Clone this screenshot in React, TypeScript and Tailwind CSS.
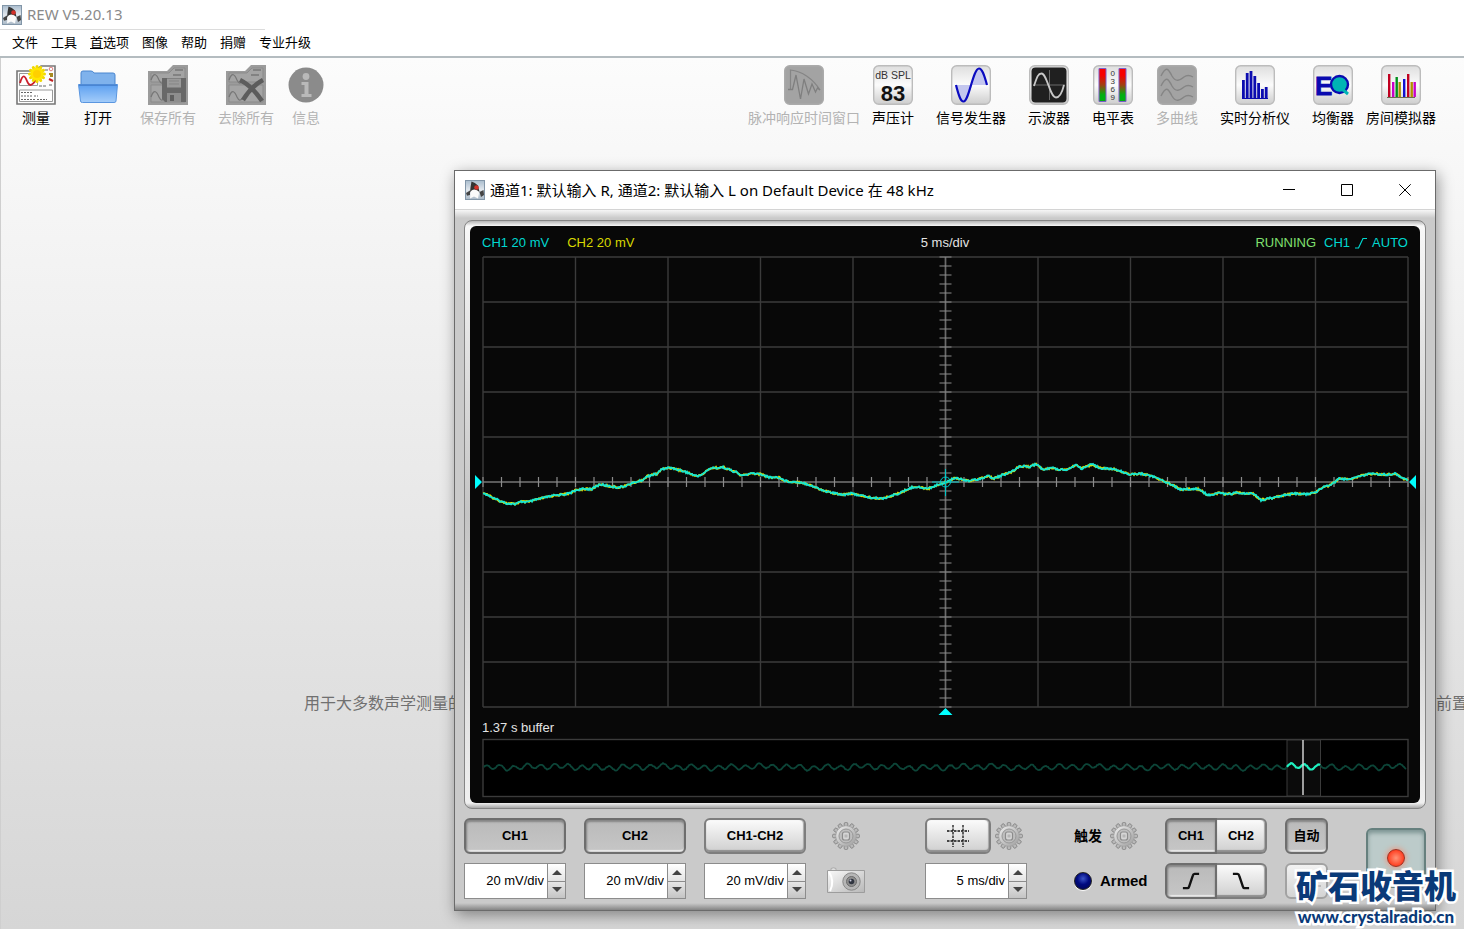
import { useState } from 'react';
import type { ReactNode } from 'react';

const menus = ['文件', '工具', '首选项', '图像', '帮助', '捐赠', '专业升级'];

// Trace samples in thirds of a pixel, [x, y]
const leftTrace = [
  [55, 128], [90, 147], [125, 160], [150, 162], [170, 155], [190, 156], [225, 146], [270, 136], [310, 131],
  [335, 120], [355, 117], [380, 117], [405, 103], [430, 108], [455, 112], [475, 110], [500, 100], [530, 91],
  [550, 77], [575, 72], [590, 58], [610, 53], [630, 56], [660, 65], [697, 79], [715, 71], [735, 55], [775, 52],
  [800, 62], [815, 67], [828, 77], [865, 70], [890, 73], [912, 82], [940, 82], [965, 94], [1010, 97],
  [1040, 107], [1075, 122], [1110, 130], [1140, 134], [1155, 130], [1185, 136], [1220, 144], [1255, 145],
  [1290, 134], [1310, 127], [1330, 116], [1350, 110], [1390, 116], [1410, 107],
];

const rightTrace = [
  [47, 97], [75, 83], [115, 92], [150, 86], [175, 78], [190, 86], [215, 76], [245, 66], [270, 48], [300, 50],
  [318, 42], [340, 60], [365, 53], [385, 58], [415, 58], [437, 44], [455, 56], [487, 43], [510, 54], [555, 58],
  [600, 73], [635, 71], [665, 78], [700, 92], [730, 106], [750, 118], [805, 117], [835, 136], [870, 128],
  [890, 133], [925, 128], [945, 132], [970, 131], [992, 150], [1025, 144], [1050, 138], [1090, 131],
  [1130, 133], [1157, 127], [1180, 111], [1200, 106], [1228, 86], [1260, 89], [1290, 78], [1325, 71],
  [1370, 74], [1395, 71], [1410, 79], [1425, 88], [1433, 88],
];

const samples = [...leftTrace, ...rightTrace.map(([x, y]) => [x + 1395, y])].map(([x, y]) => [
  x / 3 - 5,
  y / 3 + 197,
]);

function noise(n: number) {
  const v = Math.sin(n * 12.9898) * 43758.5453;
  return v - Math.floor(v) - 0.5;
}

function tracePoints(seed: number) {
  const out: string[] = [];
  let k = 0;
  for (let x = 13; x <= 938; x += 1) {
    while (k < samples.length - 2 && samples[k + 1][0] < x) k += 1;
    const [x0, y0] = samples[k];
    const [x1, y1] = samples[k + 1];
    const t = Math.min(1, Math.max(0, (x - x0) / (x1 - x0)));
    out.push(`${x},${(y0 + (y1 - y0) * t + noise(x + seed) * 2).toFixed(1)}`);
  }
  return out.join(' ');
}

function bufferPoints(from: number, to: number) {
  const out: string[] = [];
  for (let x = from; x <= to; x += 1) {
    const y = 29 + Math.sin((x - 19) / 2.17 - 0.4) * 2.3 + Math.sin(x / 5.3) * 0.9 + Math.sin(x / 17) * 0.6 + noise(x) * 0.8;
    out.push(`${x},${y.toFixed(1)}`);
  }
  return out.join(' ');
}

function JavaIcon() {
  return (
    <svg className="size-5 shrink-0" viewBox="0 0 20 20" aria-hidden="true">
      <defs>
        <linearGradient id="java" x1="0" y1="0" x2="0" y2="1">
          <stop offset="0" stopColor="#a9bccd" />
          <stop offset="0.500" stopColor="#e2e8ee" />
          <stop offset="1" stopColor="#a9b8c6" />
        </linearGradient>
      </defs>
      <rect x="0.500" y="0.500" width="19" height="19" fill="url(#java)" stroke="#8296a8" />
      <path d="M8 6 13 9 14 13 13 18.500 9 16.500 5 18.500 5.500 12Z" fill="#fafafa" />
      <path d="M6.500 1.500Q10 2.500 13 5.500L14.500 12Q12 9.500 9.500 9.500 6.500 9.500 5 12.500 5.500 6 6.500 1.500Z" fill="#333" />
      <path d="m1 13 4-2.500V15l-3 .8ZM14.500 12l4-2 .5 5-3 2Z" fill="#444" />
      <circle cx="11.500" cy="7.500" r="2.300" fill="#d3312a" />
    </svg>
  );
}

function FolderBase({ children }: { children?: ReactNode }) {
  return (
    <svg className="size-10" viewBox="0 0 40 40" aria-hidden="true">
      <path d="M0 6h19l6-6h15v40H0Z" fill="#9b9b9b" />
      <path d="M3 8h18l5-5h11v14H3zM3 20h34v17H3z" fill="#a4a4a4" stroke="#8b8b8b" />
      <path d="M3 15c3-9 6-5 8 0 2 4 3 4 6 1M3 32c3-9 6-5 8 0 2 4 3 4 6 1M27 5h8M25 10h8" fill="none" stroke="#777" strokeWidth="1.300" />
      {children}
    </svg>
  );
}

function MeasureIcon() {
  const rays = [0, 30, 60, 90, 120, 150];
  return (
    <svg className="size-10" viewBox="0 0 40 40" aria-hidden="true">
      <path d="M1 6h18l6-5h14v38H1z" fill="#fdfdfd" stroke="#777" strokeWidth="1.600" />
      <path d="M3.500 8.500h18v12h-18zM3.500 25h33v11.500h-33z" fill="#fff" stroke="#999" />
      <path d="M4 18c3-10 5-7 7-2s4 6 9-1" fill="none" stroke="#cb1f2b" strokeWidth="1.900" />
      <path d="M5 27.500h11M5 31h12m1 0h4M5 34.500h14m2 0h5m1 0h4" stroke="#666" strokeDasharray="2 1" />
      <path d="M23 21h7M29 5h4M33 20h4" stroke="#666" strokeDasharray="3 1" />
      <circle cx="35" cy="4" r="1.800" fill="none" stroke="#e08080" />
      <path d="M33 9h4M34 11h3" stroke="#a88a20" strokeWidth="2" />
      <path d="M33 14l4 2" stroke="#c02020" strokeWidth="2" />
      <g stroke="#f0d800" strokeWidth="3" strokeLinecap="round">
        {rays.map((a) => (
          <path key={a} d="M13.500 9h15" transform={`rotate(${a} 21 9)`} />
        ))}
      </g>
      <circle cx="21" cy="9" r="6.500" fill="#ffe600" />
      <circle cx="21" cy="9" r="4" fill="#ffd000" />
    </svg>
  );
}

function OpenIcon() {
  return (
    <svg className="size-10" viewBox="0 0 40 40" aria-hidden="true">
      <defs>
        <linearGradient id="openFront" x1="0" y1="0" x2="0" y2="1">
          <stop offset="0" stopColor="#5c9ff0" />
          <stop offset="1" stopColor="#a4cdfa" />
        </linearGradient>
      </defs>
      <path d="M3 20V8q0-2 2-2h8q2 0 3 2h19q2 0 2 2v10Z" fill="#7fb2ec" stroke="#4a86cf" />
      <path d="M0.500 19.500h39L38 36q0 1.500-2 1.500H4.500q-2 0-2-1.500Z" fill="url(#openFront)" stroke="#5a96e0" />
      <path d="M1 20.200h38" stroke="#3f79c6" />
    </svg>
  );
}

function SaveAllIcon() {
  return (
    <FolderBase>
      <path d="M14 13h24v24H17l-3-3Z" fill="#686868" />
      <path d="M19 13.500h14v9H19z" fill="#9a9a9a" />
      <path d="M21 16h10M21 19h10" stroke="#858585" />
      <path d="M19 28h14v9H19z" fill="#8e8e8e" />
      <path d="M22 30h4v6h-4z" fill="#5f5f5f" />
    </FolderBase>
  );
}

function RemoveAllIcon() {
  return (
    <FolderBase>
      <path d="M14 15c8 4 16 12 22 21M37 15c-8 4-15 12-20 20" fill="none" stroke="#5c5c5c" strokeWidth="4.500" />
    </FolderBase>
  );
}

function InfoIcon() {
  return (
    <svg className="size-10" viewBox="0 0 40 40" aria-hidden="true">
      <circle cx="20" cy="20" r="17.500" fill="#8b8b8b" />
      <circle cx="20" cy="11.500" r="3.400" fill="#b9b9b9" />
      <path d="M15.500 17h7v12h3v3h-10v-3h3v-9h-3Z" fill="#b9b9b9" />
    </svg>
  );
}

function Tile({ tone = 'light', children }: { tone?: 'light' | 'gray'; children: ReactNode }) {
  return (
    <svg className="size-10" viewBox="0 0 40 40" aria-hidden="true">
      <defs>
        <linearGradient id="tile" x1="0" y1="0" x2="0" y2="1">
          <stop offset="0" stopColor="#dedede" />
          <stop offset="0.500" stopColor="#fbfbfb" />
          <stop offset="1" stopColor="#cdcdcd" />
        </linearGradient>
      </defs>
      <rect x="0.700" y="0.700" width="38.600" height="38.600" rx="5" fill={tone === 'gray' ? '#a3a3a3' : 'url(#tile)'} stroke={tone === 'gray' ? '#ababab' : '#bcbcbc'} strokeWidth="1.400" />
      {children}
    </svg>
  );
}

function ImpulseIcon() {
  return (
    <Tile tone="gray">
      <path d="M6.500 25V5C18 6 29 14 36 25" fill="none" stroke="#858585" strokeWidth="1.200" />
      <path d="M4 24.500h4.500L12 10l4.500 24L20 14l4.500 15 3.500-10 3.500 8 2-4 2.500 2" fill="none" stroke="#7f7f7f" strokeWidth="1.300" />
    </Tile>
  );
}

function SplIcon() {
  return (
    <Tile>
      <text x="20" y="14" textAnchor="middle" fontSize="10.500" fill="#333" fontFamily="Liberation Sans, sans-serif">dB SPL</text>
      <text x="20" y="36" textAnchor="middle" fontSize="22" fontWeight="700" fill="#111" fontFamily="Liberation Sans, sans-serif">83</text>
    </Tile>
  );
}

function GeneratorIcon() {
  return (
    <Tile>
      <path d="M5 20h16C17 34 14 37 12 37S7 29 5 20ZM21 20C24 7 26 4 28 4s5 5 8 16Z" fill="#c3c6ee" />
      <path d="M5 20C8 32 10 36.500 12.500 36.500 18 36.500 22 3.500 28 3.500 31 3.500 33 9 36 20" fill="none" stroke="#0a0ac0" strokeWidth="2.200" />
    </Tile>
  );
}

function ScopeIcon() {
  return (
    <Tile>
      <rect x="2.500" y="2.500" width="35" height="35" rx="4" fill="#202020" />
      <path d="M4 20h32M20.500 5v30" stroke="#6a6a6a" />
      <path d="M5 21C8 12 9 8.500 12.500 8.500 18 8.500 21 32.500 27 32.500 31 32.500 33 28 35 20" fill="none" stroke="#c8c8c8" strokeWidth="1.800" />
    </Tile>
  );
}

function LevelIcon() {
  return (
    <Tile>
      <defs>
        <linearGradient id="level" x1="0" y1="0" x2="0" y2="1">
          <stop offset="0.200" stopColor="#f80000" />
          <stop offset="0.500" stopColor="#a04010" />
          <stop offset="0.800" stopColor="#00b010" />
        </linearGradient>
      </defs>
      <path d="M6 3.500h7v33H6zM26 3.500h7v33h-7z" fill="url(#level)" stroke="#7c5bc8" />
      <g fontSize="8" fill="#333" fontFamily="Liberation Sans, sans-serif">
        <text x="17.500" y="11">0</text>
        <text x="17.500" y="19">3</text>
        <text x="17.500" y="27">6</text>
        <text x="17.500" y="35">9</text>
      </g>
    </Tile>
  );
}

function TracesIcon() {
  return (
    <Tile tone="gray">
      <g fill="none" stroke="#858585" strokeWidth="1.400">
        <path d="M4 11c5-10 7-8 11 0 4 7 8 4 12 1q4-3 9 0" />
        <path d="M4 21c5-10 7-8 11 0 4 7 8 4 12 1q4-3 9 0" />
        <path d="M4 31c5-10 7-8 11 0 4 7 8 4 12 1q4-3 9 0" />
      </g>
    </Tile>
  );
}

function RtaIcon() {
  const bars = [15, 8, 6, 11, 18, 24, 22];
  return (
    <Tile>
      {bars.map((top, i) => (
        <rect key={i} x={7 + i * 3.8} y={top} width="2.800" height={34 - top} fill="#0c0cb0" />
      ))}
      <path d="M7 33.500h26" stroke="#0c0cb0" />
    </Tile>
  );
}

function EqIcon() {
  return (
    <Tile>
      <text x="2" y="29.500" fontSize="26" fontWeight="700" fill="#0a0ab0" stroke="#0a0ab0" strokeWidth="0.800" fontFamily="Liberation Sans, sans-serif">E</text>
      <circle cx="26.500" cy="19.500" r="8.500" fill="#00b4b4" stroke="#0a0ab0" strokeWidth="2.400" />
      <path d="m29 24 6 5" stroke="#00b4b4" strokeWidth="3" />
    </Tile>
  );
}

function RoomIcon() {
  const bars = [
    [7, 9, '#c00020'], [11, 17, '#c800c8'], [14.5, 12, '#00901c'], [17.5, 17, '#b09000'],
    [22, 14, '#1010d0'], [26, 9, '#c00020'], [29.5, 17, '#b09000'], [32.5, 17, '#c800c8'],
  ] as const;
  return (
    <Tile>
      {bars.map(([x, top, color]) => (
        <rect key={x} x={x} y={top} width="2.400" height={32 - top} fill={color} />
      ))}
      <path d="M6 32.500h28" stroke="#6b6b50" />
    </Tile>
  );
}

function ToolButton({ label, icon, disabled }: { label: string; icon: ReactNode; disabled?: boolean }) {
  return (
    <button
      type="button"
      disabled={disabled}
      className="flex shrink-0 flex-col items-center text-sm leading-5 whitespace-nowrap text-black disabled:text-[#b3b3b3]"
    >
      {icon}
      <span className="mt-[3px]">{label}</span>
    </button>
  );
}

function Gear() {
  const teeth = [0, 30, 60, 90, 120, 150];
  return (
    <svg className="size-7" viewBox="0 0 28 28" aria-hidden="true">
      <defs>
        <linearGradient id="gear" x1="0" y1="0" x2="1" y2="1">
          <stop offset="0" stopColor="#efefef" />
          <stop offset="1" stopColor="#9c9c9c" />
        </linearGradient>
      </defs>
      <g fill="#b8b8b8" stroke="#7d7d7d" strokeWidth="0.800">
        {teeth.map((a) => (
          <rect key={a} x="12.200" y="0.500" width="3.600" height="27" rx="1.300" transform={`rotate(${a} 14 14)`} />
        ))}
      </g>
      <circle cx="14" cy="14" r="10.300" fill="url(#gear)" stroke="#a0a0a0" strokeWidth="0.700" />
      <circle cx="14" cy="14" r="7" fill="#bebebe" stroke="#989898" />
      <rect x="10.500" y="10" width="7" height="8" rx="2" fill="#d6d6d6" stroke="#8c8c8c" strokeWidth="1.200" />
      <path d="M12.500 12.500h3v3h-3z" fill="#b5b5b5" />
    </svg>
  );
}

function Camera() {
  return (
    <svg className="h-7 w-10" viewBox="0 0 40 28" aria-hidden="true">
      <defs>
        <linearGradient id="camera" x1="0" y1="0" x2="1" y2="1">
          <stop offset="0" stopColor="#fafafa" />
          <stop offset="1" stopColor="#b8b8b8" />
        </linearGradient>
      </defs>
      <path d="M5 3V1.500q2.500-1.500 5 0V3" fill="#ddd" stroke="#aaa" />
      <path d="M1.500 3.500h37v22h-37z" fill="url(#camera)" stroke="#9d9d9d" />
      <path d="M3 5q6 9 1 19" fill="none" stroke="#fff" strokeWidth="2" />
      <circle cx="25.500" cy="14.500" r="8.700" fill="#b6b6b6" stroke="#888" />
      <circle cx="25.500" cy="14.500" r="5" fill="#8f8f8f" stroke="#6c6c6c" />
      <circle cx="25.500" cy="14.500" r="2.800" fill="#303540" />
      <circle cx="24.500" cy="13.500" r="1" fill="#ccd" />
    </svg>
  );
}

function Slope({ falling }: { falling?: boolean }) {
  return (
    <svg className="size-[18px]" viewBox="0 0 20 20" fill="none" stroke="#111" strokeWidth="2.600" aria-hidden="true">
      {falling ? <path d="M1 2h5q1.500 0 2 2l4 12q.5 2 2 2h5" /> : <path d="M19 2h-5q-1.500 0-2 2L8 16q-.5 2-2 2H1" />}
    </svg>
  );
}

const raised =
  'bg-gradient-to-b from-[#fbfbfb] to-[#cfcfcf] border-[#7e7e7e] shadow-[inset_0_-2px_1px_#8e8e8e,inset_-1px_0_1px_#aaa,inset_0_1px_0_#fff]';
const pressed =
  'bg-gradient-to-b from-[#bababa] to-[#c6c6c6] border-[#6e6e6e] shadow-[inset_0_2px_2px_#858585,inset_1px_0_2px_#8a8a8a,inset_0_-2px_1px_#f0f0f0]';

function PanelButton({ on, className, children, onClick, label }: {
  on?: boolean;
  className?: string;
  children: ReactNode;
  onClick?: () => void;
  label?: string;
}) {
  return (
    <button
      type="button"
      aria-label={label}
      aria-pressed={on}
      onClick={onClick}
      className={`flex h-9 items-center justify-center rounded-md border-2 text-[13px] font-bold ${on ? pressed : raised} ${className ?? ''}`}
    >
      {children}
    </button>
  );
}

function Spinner({ label, values, initial }: { label: string; values: string[]; initial: number }) {
  const [index, setIndex] = useState(initial);
  const step = (d: number) => setIndex((i) => Math.min(values.length - 1, Math.max(0, i + d)));
  return (
    <div className="flex h-9 w-[102px] border border-[#8c8c8c] bg-white">
      <input
        aria-label={label}
        value={values[index]}
        readOnly
        className="w-0 min-w-0 flex-1 bg-white pr-[3px] text-right text-[13px] outline-none"
      />
      <div className="flex w-[18px] flex-col border-l border-[#8c8c8c]">
        <button type="button" aria-label={`${label} +`} onClick={() => step(1)} className="flex flex-1 items-center justify-center border-b border-[#8c8c8c] bg-gradient-to-b from-white to-[#e4e4e4]">
          <svg className="h-[5px] w-[10px]" viewBox="0 0 10 5"><path d="M0 5h10L5 0Z" fill="#444" /></svg>
        </button>
        <button type="button" aria-label={`${label} -`} onClick={() => step(-1)} className="flex flex-1 items-center justify-center bg-gradient-to-b from-[#e6e6e6] to-[#c4c4c4]">
          <svg className="h-[5px] w-[10px]" viewBox="0 0 10 5"><path d="M0 0h10L5 5Z" fill="#444" /></svg>
        </button>
      </div>
    </div>
  );
}

function Graph() {
  const divisions = Array.from({ length: 11 }, (_, i) => i);
  const ticks = Array.from({ length: 51 }, (_, i) => i);
  return (
    <svg className="block h-auto w-full" viewBox="0 0 950 465" aria-label="5 ms/div">
      <g stroke="#3b3b3b" strokeWidth="1.400">
        {divisions.map((i) => (
          <path key={i} d={`M${13 + i * 92.5} 4v450M13 ${4 + i * 45}h925`} />
        ))}
      </g>
      <path d="M13 229h925M475.500 4v450" stroke="#6a6a6a" strokeWidth="1.600" />
      <g stroke="#8b8b8b" strokeWidth="1.200">
        {ticks.map((i) => (
          <path key={i} d={`M${13 + i * 18.5} 224v10M469.500 ${4 + i * 9}h12`} />
        ))}
      </g>
      <polyline points={tracePoints(7)} fill="none" stroke="#e3e300" strokeWidth="1.800" />
      <polyline points={tracePoints(0)} fill="none" stroke="#16e6d2" strokeWidth="1.800" />
      <path d="M475.500 216v27M462 229h27" stroke="#00c8c8" />
      <circle cx="475.500" cy="229" r="5" fill="none" stroke="#00c8c8" />
      <path d="M5 222v14l7-7ZM946 222v14l-7-7ZM468.500 462h14l-7-7Z" fill="#00ffff" />
    </svg>
  );
}

function BufferStrip() {
  return (
    <svg className="block h-auto w-full" viewBox="0 0 950 60" aria-label="1.37 s buffer">
      <rect x="13" y="1.500" width="925" height="57" fill="#000" stroke="#3b3b3b" strokeWidth="1.400" />
      <path d="M817 2h33.500v56H817z" fill="#0b0b0b" stroke="#3b3b3b" />
      <polyline points={bufferPoints(14, 817)} fill="none" stroke="#0c4538" strokeWidth="1.800" />
      <polyline points={bufferPoints(850, 936)} fill="none" stroke="#0c4538" strokeWidth="1.800" />
      <polyline points={bufferPoints(817, 850)} fill="none" stroke="#1ff0c0" strokeWidth="2.200" />
      <path d="M833 2v55" stroke="#ddd" strokeWidth="1.400" />
    </svg>
  );
}

const voltSteps = ['5 mV/div', '10 mV/div', '20 mV/div', '50 mV/div', '100 mV/div'];
const timeSteps = ['1 ms/div', '2 ms/div', '5 ms/div', '10 ms/div', '20 ms/div'];

function ScopeWindow() {
  const [ch1, setCh1] = useState(true);
  const [ch2, setCh2] = useState(true);
  const [diff, setDiff] = useState(false);
  const [source, setSource] = useState('CH1');
  const [rising, setRising] = useState(true);
  const [auto, setAuto] = useState(true);

  return (
    <section className="absolute top-[170px] right-7 left-[454px] border border-[#6b6b6b] bg-[#cacaca] shadow-[2px_4px_14px_rgba(0,0,0,0.4)]">
      <header className="flex h-[39px] items-center border-b border-[#d4d4d4] bg-white pl-[10px]">
        <JavaIcon />
        <h2 className="ml-[5px] font-['Noto_Sans','Noto_Sans_CJK_SC',sans-serif] text-[15px] whitespace-nowrap">
          通道1: 默认输入 R, 通道2: 默认输入 L on Default Device 在 48 kHz
        </h2>
        <div className="ml-auto flex pr-px">
          {[
            ['Minimize', 'M0 5.500h12'],
            ['Maximize', 'M.5.5h11v11H.5z'],
            ['Close', 'm.3.3 11.400 11.400M11.700.3.3 11.700'],
          ].map(([name, d]) => (
            <button key={name} type="button" aria-label={name} className="flex h-9 w-[58px] items-center justify-center">
              <svg className="size-3" viewBox="0 0 12 12" fill="none" stroke="#000"><path d={d} /></svg>
            </button>
          ))}
        </div>
      </header>
      <div className="bg-[linear-gradient(to_bottom,#f6f6f6,#cacaca_8px,#cacaca_calc(100%-7px),#858585)] px-[9px] pt-[10px] pb-[11px]">
        <div className="rounded-lg border border-[#858585] bg-[linear-gradient(to_bottom,#b5b5b5,#f8f8f8_5px,#c4c4c4_50%,#f0f0f0_calc(100%-5px),#a8a8a8)] p-[5px]">
          <div className="rounded-md bg-[#080808] pt-[7px] pb-[5px]">
            <div className="grid grid-cols-3 px-3 text-[13px] leading-5">
              <div className="flex gap-[18px]">
                <span className="text-[#00d8d0]">CH1 20 mV</span>
                <span className="text-[#d8d800]">CH2 20 mV</span>
              </div>
              <span className="text-center text-[#e4e4e4]">5 ms/div</span>
              <div className="flex items-center justify-end text-[#00d8d0]">
                <span className="mr-2 text-[#80e070]">RUNNING</span>
                <span>CH1</span>
                <svg className="mx-[5px] size-3" viewBox="0 0 12 12" fill="none" stroke="currentColor" strokeWidth="1.200">
                  <path d="M0 11h3.500L8 1.500h4" />
                </svg>
                <span>AUTO</span>
              </div>
            </div>
            <Graph />
            <p className="pl-3 text-[13px] leading-5 text-[#e4e4e4]">1.37 s buffer</p>
            <BufferStrip />
          </div>
        </div>

        <div className="mt-[9px] flex">
          <div className="flex gap-[18px]">
            <div className="flex flex-col gap-[9px]">
              <PanelButton on={ch1} onClick={() => setCh1(!ch1)} className="w-[102px]">CH1</PanelButton>
              <Spinner label="CH1" values={voltSteps} initial={2} />
            </div>
            <div className="flex flex-col gap-[9px]">
              <PanelButton on={ch2} onClick={() => setCh2(!ch2)} className="w-[102px]">CH2</PanelButton>
              <Spinner label="CH2" values={voltSteps} initial={2} />
            </div>
            <div className="flex flex-col gap-[9px]">
              <PanelButton on={diff} onClick={() => setDiff(!diff)} className="w-[102px]">CH1-CH2</PanelButton>
              <Spinner label="CH1-CH2" values={voltSteps} initial={2} />
            </div>
            <div className="flex w-11 flex-col items-center gap-[9px]">
              <button type="button" aria-label="Settings" className="flex h-9 items-center"><Gear /></button>
              <button type="button" aria-label="Capture" className="flex h-9 items-center"><Camera /></button>
            </div>
          </div>

          <div className="ml-[57px] flex flex-col gap-[9px]">
            <div className="flex items-center gap-1">
              <PanelButton label="Grid" className="w-[66px]">
                <svg className="size-[22px]" viewBox="0 0 22 22" fill="none" stroke="#111" strokeWidth="1.300" strokeDasharray="2.500 1" aria-hidden="true">
                  <path d="M6 0v22M16 0v22M0 6h22M0 16h22" />
                </svg>
              </PanelButton>
              <button type="button" aria-label="Time settings"><Gear /></button>
            </div>
            <Spinner label="Time" values={timeSteps} initial={2} />
          </div>

          <div className="ml-[47px] flex w-[74px] flex-col gap-[9px]">
            <div className="flex h-9 items-center gap-2 text-sm font-bold whitespace-nowrap">
              <span>触发</span>
              <button type="button" aria-label="Trigger settings"><Gear /></button>
            </div>
            <div className="flex h-9 items-center gap-2 text-[15px] font-bold">
              <span className="size-[18px] shrink-0 rounded-full border border-[#222] bg-[radial-gradient(circle_at_50%_35%,#3b54c8,#000a80_45%,#00044a)] shadow-[0_1px_1px_#fff]" />
              <span>Armed</span>
            </div>
          </div>

          <div className="ml-[17px] flex flex-col gap-[9px]">
            <div className="flex">
              <PanelButton on={source === 'CH1'} onClick={() => setSource('CH1')} className="w-[52px] rounded-r-none">CH1</PanelButton>
              <PanelButton on={source === 'CH2'} onClick={() => setSource('CH2')} className="w-[50px] rounded-l-none border-l-0">CH2</PanelButton>
            </div>
            <div className="flex">
              <PanelButton label="Rising" on={rising} onClick={() => setRising(true)} className="w-[52px] rounded-r-none"><Slope /></PanelButton>
              <PanelButton label="Falling" on={!rising} onClick={() => setRising(false)} className="w-[50px] rounded-l-none border-l-0"><Slope falling /></PanelButton>
            </div>
          </div>

          <div className="ml-[18px] flex flex-col gap-[9px]">
            <PanelButton on={auto} onClick={() => setAuto(!auto)} className="w-[43px]">自动</PanelButton>
            <button type="button" disabled aria-label="Single" className="flex h-9 w-[43px] items-center justify-center rounded-md border-2 border-[#a2a2a2] bg-gradient-to-b from-[#f2f2f2] to-[#d4d4d4]">
              <svg className="h-3 w-7" viewBox="0 0 28 12" fill="none" stroke="#bbb" strokeWidth="2"><path d="M1 11h4l3-9h4M17 2h3l4 9h4" /></svg>
            </button>
          </div>

          <button type="button" aria-label="Record" className="mt-[10px] ml-auto flex h-[60px] w-[60px] items-center justify-center rounded-md border-2 border-[#66807e] bg-[#bccbca] shadow-[inset_0_3px_4px_#7d9493]">
            <span className="size-[18px] rounded-full border border-[#a03020] bg-[radial-gradient(circle,#ff9478,#ff4022_70%)] shadow-[0_0_6px_#ff8060]" />
          </button>
        </div>
      </div>
    </section>
  );
}

function App() {
  return (
    <div className="relative flex min-h-screen flex-col overflow-hidden bg-white font-['Liberation_Sans','Noto_Sans_CJK_SC',sans-serif] text-black">
      <header className="flex h-[30px] w-[265px] items-center border-b border-[#dcdcdc] pl-[2px]">
        <JavaIcon />
        <h1 className="ml-[5px] font-['Noto_Sans','Noto_Sans_CJK_SC',sans-serif] text-[15px] text-[#8a8a8a]">REW V5.20.13</h1>
      </header>
      <nav className="flex h-7 items-center gap-[13px] border-b-2 border-[#b4bcc0] pl-3 text-[13px] leading-5 whitespace-nowrap">
        {menus.map((m) => (
          <button key={m} type="button">
            {m === '首选项' ? <><u>首</u>选项</> : m}
          </button>
        ))}
      </nav>

      <main className="flex flex-1 flex-col border-l border-[#cfcfcf] bg-gradient-to-b from-[#fcfcfc] to-[#d6d6d6]">
        <div className="flex justify-between pt-[7px] pr-7 pl-[15px]">
          <div className="flex gap-3">
            <div className="flex gap-[22px]">
              <ToolButton label="测量" icon={<MeasureIcon />} />
              <ToolButton label="打开" icon={<OpenIcon />} />
              <ToolButton label="保存所有" icon={<SaveAllIcon />} disabled />
              <ToolButton label="去除所有" icon={<RemoveAllIcon />} disabled />
            </div>
            <ToolButton label="信息" icon={<InfoIcon />} disabled />
          </div>
          <div className="flex gap-3">
            <ToolButton label="脉冲响应时间窗口" icon={<ImpulseIcon />} disabled />
            <div className="flex gap-[22px]">
              <ToolButton label="声压计" icon={<SplIcon />} />
              <ToolButton label="信号发生器" icon={<GeneratorIcon />} />
              <ToolButton label="示波器" icon={<ScopeIcon />} />
              <ToolButton label="电平表" icon={<LevelIcon />} />
              <ToolButton label="多曲线" icon={<TracesIcon />} disabled />
              <ToolButton label="实时分析仪" icon={<RtaIcon />} />
              <ToolButton label="均衡器" icon={<EqIcon />} />
            </div>
            <ToolButton label="房间模拟器" icon={<RoomIcon />} />
          </div>
        </div>
        <p className="mt-auto mb-[213px] flex justify-between overflow-hidden pl-[303px] leading-6 whitespace-nowrap text-[#707070]">
          <span>用于大多数声学测量的</span>
          <span className="w-7">前置</span>
        </p>
      </main>

      <ScopeWindow />

      <a
        href="http://www.crystalradio.cn"
        className="absolute right-2 bottom-0 flex flex-col items-center text-[#0a3a78] [paint-order:stroke_fill] [-webkit-text-stroke:5px_white]"
      >
        <span className="font-['Noto_Sans_CJK_SC',sans-serif] text-[32px] leading-[42px] font-black">矿石收音机</span>
        <span className="font-['Lato',sans-serif] text-[17px] leading-6 font-black">www.crystalradio.cn</span>
      </a>
    </div>
  );
}

export default App;
